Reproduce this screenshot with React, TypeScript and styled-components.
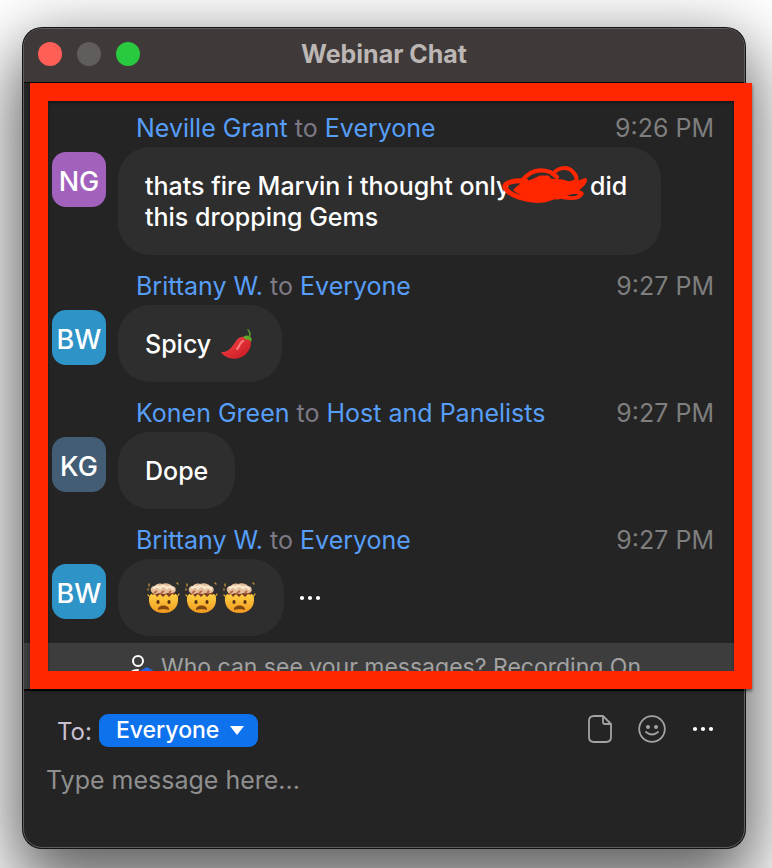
import React from "react";
import styled, { createGlobalStyle } from "styled-components";

const GlobalStyle = createGlobalStyle`
  *, *::before, *::after { box-sizing: border-box; }
  body {
    margin: 0;
    background: #fff;
    font-family: Inter, "Liberation Sans", sans-serif;
    font-size: 25px;
    line-height: 31px;
    color: #fff;
  }
  button, select, textarea { font: inherit; border: 0; }
`;

const Page = styled.main`
  display: flex;
  min-height: 100vh;
  padding: 28px 27px 20px 23px;
  overflow: hidden;
`;

const ChatWindow = styled.section`
  flex: 1;
  min-width: 0;
  display: flex;
  flex-direction: column;
  background: #242424;
  border: 1px solid #5f5d5d;
  border-radius: 19px;
  box-shadow: 0 0 0 1px #141414, 0 0 60px rgba(0, 0, 0, 0.18), 0 36px 70px 8px rgba(0, 0, 0, 0.56);
`;

const TitleBar = styled.header`
  display: grid;
  grid-template-columns: 1fr auto 1fr;
  align-items: center;
  height: 53px;
  padding: 0 14px 3px;
  background: #3f3a39;
  border-radius: 18px 18px 0 0;
`;

const Lights = styled.div`
  display: flex;
  gap: 15px;
`;

const Light = styled.button<{ $color: string }>`
  width: 24px;
  height: 24px;
  padding: 0;
  border-radius: 50%;
  background: ${(p) => p.$color};
`;

const Title = styled.h1`
  margin: 0;
  font-size: 25px;
  font-weight: 700;
  color: #bcb6b5;
`;

const ChatArea = styled.section`
  position: relative;
  border-top: 1px solid #080808;
  border-bottom: 2px solid #080808;
  padding-top: 14px;
`;

const Highlight = styled.div`
  position: absolute;
  inset: 0 -8px 0 6px;
  border: 18px solid #ff2600;
  box-shadow: 0 2px 3px rgba(0, 0, 0, 0.5), inset 0 2px 3px rgba(0, 0, 0, 0.4);
  pointer-events: none;
`;

const MessageList = styled.ol`
  list-style: none;
  margin: 0;
  padding: 0;
`;

const MessageMeta = styled.div`
  display: flex;
  justify-content: space-between;
  height: 50px;
  padding: 16px 30px 0 112px;
`;

const Names = styled.span`
  color: #7d7985;
`;

const Person = styled.span`
  color: #579ef8;
`;

const Time = styled.time`
  color: #7e7e7e;
`;

const MessageBody = styled.div`
  display: flex;
  align-items: flex-start;
  gap: 12px;
  padding-left: 28px;
`;

const Avatar = styled.span<{ $color: string }>`
  display: grid;
  place-items: center;
  flex: none;
  width: 54px;
  height: 55px;
  margin-top: 5px;
  padding-top: 3px;
  border-radius: 14px;
  font-size: 27px;
  font-weight: 500;
  background: ${(p) => p.$color};
`;

const Bubble = styled.p`
  margin: 0;
  max-width: 543px;
  padding: 24px 27px 22px;
  border-radius: 32px;
  background: #2e2e2e;
  font-weight: 500;
`;

const Redaction = styled.span`
  position: relative;
  display: inline-block;
  width: 73px;
  height: 20px;

  svg {
    position: absolute;
    left: -8px;
    top: -10px;
  }
`;

const EmojiRow = styled.span`
  display: inline-flex;
  vertical-align: top;
  height: 31px;
  align-items: center;
  gap: 5px;
  padding: 0 1px 2px 2px;
`;

const MoreButton = styled.button`
  align-self: center;
  display: grid;
  padding: 0;
  margin-left: 3px;
  background: none;
`;

const Notice = styled.div`
  display: flex;
  align-items: center;
  gap: 8px;
  height: 46px;
  margin-top: 7px;
  padding: 2px 0 0 105px;
  overflow: hidden;
  background: #3d3d3d;
  color: #a2a2a2;
  font-size: 23px;
  white-space: nowrap;
`;

const Composer = styled.form`
  flex: 1;
  display: flex;
  flex-direction: column;
  gap: 18px;
  padding: 23px 30px 20px 22px;
`;

const Toolbar = styled.div`
  display: flex;
  align-items: center;
  padding-left: 11px;
`;

const ToLabel = styled.label`
  margin-right: 7px;
  padding-top: 2px;
  font-size: 24px;
  color: #c9c0d2;
`;

const Recipient = styled.div`
  display: grid;
  align-items: center;

  > * { grid-area: 1 / 1; }

  svg {
    justify-self: end;
    margin-right: 14px;
    pointer-events: none;
  }
`;

const RecipientSelect = styled.select`
  appearance: none;
  width: 159px;
  height: 33px;
  padding: 0 26px 1px 17px;
  border-radius: 9px;
  background: #0e72ec;
  color: #fff;
  font-size: 23px;
  font-weight: 500;
`;

const Tools = styled.div`
  display: flex;
  align-items: center;
  gap: 26px;
  margin-left: auto;
  padding-bottom: 4px;
`;

const ToolButton = styled.button`
  display: grid;
  padding: 0;
  background: none;
`;

const MessageInput = styled.textarea`
  flex: 1;
  min-height: 31px;
  padding: 0;
  resize: none;
  outline: none;
  background: none;
  color: #fff;

  &::placeholder { color: #8f8f8f; opacity: 1; }
`;

const Dots = () => (
  <svg width="22" height="6" viewBox="0 0 22 6" fill="#fff" aria-hidden="true">
    <circle cx="3" cy="3" r="2.100" />
    <circle cx="11" cy="3" r="2.100" />
    <circle cx="19" cy="3" r="2.100" />
  </svg>
);

const Pepper = () => (
  <svg width="34" height="32" viewBox="0 0 34 32" role="img" aria-label="Hot pepper">
    <defs>
      <linearGradient id="chili" x1="0" y1="0" x2="1" y2="1">
        <stop offset="0" stopColor="#f5474a" />
        <stop offset="1" stopColor="#c81720" />
      </linearGradient>
    </defs>
    <path d="M1 24C8 25 12 19 16 13C19 8 24 8 28 10C33 13 31 21 26 26C19 33 6 32 1 24Z" fill="url(#chili)" />
    <path d="M17 21C20 18 20 14 23 13" fill="none" stroke="#ff7f80" strokeWidth="2" strokeLinecap="round" />
    <path d="M23 10C24 7 27 7 29 8C32 9 32 12 31 14C30 12 28 11 26 12C25 10 24 10 23 10Z" fill="#63a72b" />
    <path d="M29 9C31 6 30 4 28 2" fill="none" stroke="#589a28" strokeWidth="1.600" strokeLinecap="round" />
  </svg>
);

const ExplodingHead = () => (
  <svg width="33" height="32" viewBox="0 0 33 32" role="img" aria-label="Exploding head">
    <defs>
      <linearGradient id="face" x1="0" y1="0" x2="0" y2="1">
        <stop offset="0" stopColor="#ffd043" />
        <stop offset="1" stopColor="#f09a20" />
      </linearGradient>
    </defs>
    <path d="M2 15L4 12L29 12L31 15C32 25 26 31 16.500 31C7 31 1 25 2 15Z" fill="url(#face)" />
    <path d="M3 15L1 13M30 15L32 12" stroke="#e9ae30" strokeWidth="1.300" strokeLinecap="round" />
    <path d="M5 9L5 13L8 12L10 15L13 12L16 15L19 12L22 15L25 12L28 13L28 9Z" fill="#7d3a24" />
    <path d="M4 9C3 6 5 4 8 4C9 2 12 1 15 2C19 0 24 2 25 4C28 4 30 7 28 10C25 12 22 11 20 11C17 13 14 11 12 11C9 13 5 12 4 9Z" fill="#e4bd99" />
    <path d="M7 6C9 4 11 4 13 6C15 3 18 4 20 6C22 4 25 5 26 7" fill="none" stroke="#f8e6cd" strokeWidth="2.500" strokeLinecap="round" />
    <path d="M7 11L10 9M14 11L17 9M22 11L24 9" stroke="#b5654a" strokeWidth="1.800" />
    <path d="M2 2L2 4M30 1L31 2M1 7V8" stroke="#c7943a" strokeWidth="1.300" strokeLinecap="round" />
    <ellipse cx="11" cy="20" rx="1.600" ry="2" fill="#583114" />
    <ellipse cx="22" cy="20" rx="1.600" ry="2" fill="#583114" />
    <path d="M11 28C10 22 23 22 22 28C20 27 13 27 11 28Z" fill="#83460f" />
  </svg>
);

const Scribble = () => (
  <svg width="88" height="40" viewBox="0 0 88 40" fill="none" stroke="#ff2600" strokeLinecap="round" strokeLinejoin="round" aria-hidden="true">
    <path d="M19 20L30 16L38 12L46 12L48 15L60 16L67 18L74 16L77 20L72 27L62 30L49 31L40 34L24 32L13 25Z" fill="#ff2600" strokeWidth="3" />
    <path d="M24 16C11 15 2 18 3 22C6 30 24 37 42 35C48 34 51 31 56 32" strokeWidth="5" />
    <path d="M19 17C26 7 36 3 48 7L55 12" strokeWidth="4" />
    <path d="M51 9C56 2 66 1 71 7C75 11 75 14 74 20" strokeWidth="4" />
    <path d="M70 20L83 15C84 18 76 24 72 27C82 27 81 29 76 32C69 35 62 32 54 31" strokeWidth="4" />
  </svg>
);

type Message = {
  from: string;
  to: string;
  time: string;
  initials: string;
  color: string;
  body: React.ReactNode;
  menu?: boolean;
};

const messages: Message[] = [
  {
    from: "Neville Grant",
    to: "Everyone",
    time: "9:26 PM",
    initials: "NG",
    color: "#a261bd",
    body: (
      <>
        <span>thats fire Marvin i thought only</span>
        <Redaction><Scribble /></Redaction> <span>did</span> <span>this dropping Gems</span>
      </>
    ),
  },
  {
    from: "Brittany W.",
    to: "Everyone",
    time: "9:27 PM",
    initials: "BW",
    color: "#2e93c7",
    body: <>Spicy <EmojiRow><Pepper /></EmojiRow></>,
  },
  {
    from: "Konen Green",
    to: "Host and Panelists",
    time: "9:27 PM",
    initials: "KG",
    color: "#435d75",
    body: "Dope",
  },
  {
    from: "Brittany W.",
    to: "Everyone",
    time: "9:27 PM",
    initials: "BW",
    color: "#2e93c7",
    body: <EmojiRow><ExplodingHead /><ExplodingHead /><ExplodingHead /></EmojiRow>,
    menu: true,
  },
];

export default function App() {
  return (
    <>
      <GlobalStyle />
      <Page>
        <ChatWindow>
          <TitleBar>
            <Lights>
              <Light $color="#ff5f57" aria-label="Close" />
              <Light $color="#625d5d" aria-label="Minimize" />
              <Light $color="#29c940" aria-label="Zoom" />
            </Lights>
            <Title>Webinar Chat</Title>
          </TitleBar>
          <ChatArea>
            <MessageList>
              {messages.map((m, i) => (
                <li key={i}>
                  <MessageMeta>
                    <Names><Person>{m.from}</Person> to <Person>{m.to}</Person></Names>
                    <Time>{m.time}</Time>
                  </MessageMeta>
                  <MessageBody>
                    <Avatar $color={m.color}>{m.initials}</Avatar>
                    <Bubble>{m.body}</Bubble>
                    {m.menu && <MoreButton aria-label="Message options"><Dots /></MoreButton>}
                  </MessageBody>
                </li>
              ))}
            </MessageList>
            <Notice>
              <svg width="24" height="26" viewBox="0 0 24 26" fill="none" aria-hidden="true">
                <circle cx="9" cy="7" r="5" stroke="#fff" strokeWidth="2" />
                <path d="M1 22C1 18 4 16 9 16" stroke="#fff" strokeWidth="2" strokeLinecap="round" />
                <path d="M18 13L25 17V22L18 26L11 22V17Z" fill="#2469e5" />
              </svg>
              Who can see your messages? Recording On
            </Notice>
            <Highlight />
          </ChatArea>
          <Composer>
            <Toolbar>
              <ToLabel htmlFor="recipient">To:</ToLabel>
              <Recipient>
                <RecipientSelect id="recipient" defaultValue="Everyone">
                  <option>Everyone</option>
                  <option>Host and Panelists</option>
                </RecipientSelect>
                <svg width="14" height="9" viewBox="0 0 14 9" aria-hidden="true">
                  <path d="M0 0H14L7 9Z" fill="#fff" />
                </svg>
              </Recipient>
              <Tools>
                <ToolButton type="button" aria-label="Attach file">
                  <svg width="24" height="28" viewBox="0 0 24 28" fill="none" stroke="#a3a3a3" strokeWidth="1.800" strokeLinejoin="round">
                    <path d="M15 1H6Q1 1 1 6V22Q1 27 6 27H18Q23 27 23 22V9ZM15 1V7Q15 9 17 9H23" />
                  </svg>
                </ToolButton>
                <ToolButton type="button" aria-label="Insert emoji">
                  <svg width="28" height="28" viewBox="0 0 28 28" fill="none" stroke="#a3a3a3" strokeWidth="1.800" strokeLinecap="round">
                    <circle cx="14" cy="14" r="12.800" />
                    <circle cx="10" cy="12" r="2" fill="#a3a3a3" stroke="none" />
                    <circle cx="18" cy="12" r="2" fill="#a3a3a3" stroke="none" />
                    <path d="M8 17Q14 22 20 17" />
                  </svg>
                </ToolButton>
                <ToolButton type="button" aria-label="More options"><Dots /></ToolButton>
              </Tools>
            </Toolbar>
            <MessageInput aria-label="Message" placeholder="Type message here..." />
          </Composer>
        </ChatWindow>
      </Page>
    </>
  );
}
